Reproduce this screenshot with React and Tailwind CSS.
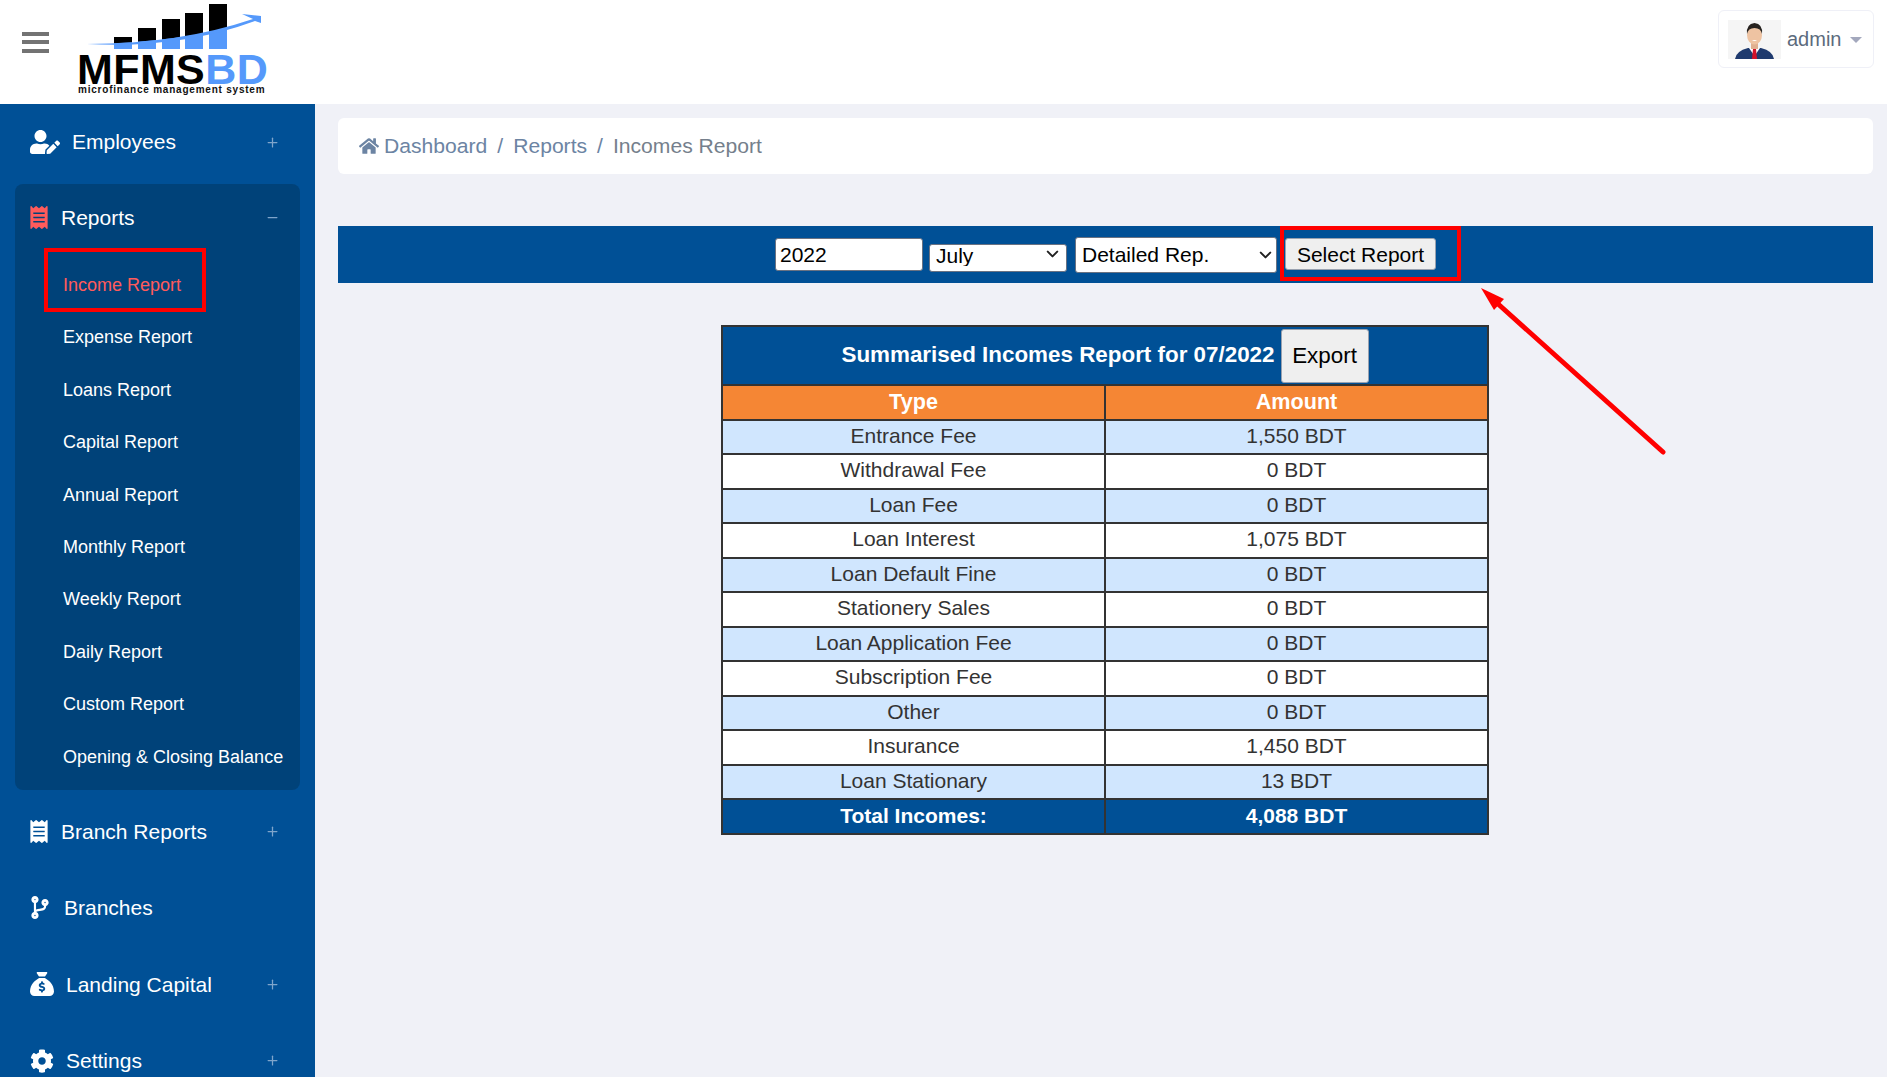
import { FaUserEdit, FaReceipt, FaCodeBranch, FaCog, FaHome } from 'react-icons/fa'
import { FaSackDollar } from 'react-icons/fa6'
import { Plus, Minus, ChevronDown } from 'lucide-react'

const subLinks = [
  'Income Report',
  'Expense Report',
  'Loans Report',
  'Capital Report',
  'Annual Report',
  'Monthly Report',
  'Weekly Report',
  'Daily Report',
  'Custom Report',
  'Opening & Closing Balance',
]

const rows = [
  ['Entrance Fee', '1,550 BDT'],
  ['Withdrawal Fee', '0 BDT'],
  ['Loan Fee', '0 BDT'],
  ['Loan Interest', '1,075 BDT'],
  ['Loan Default Fine', '0 BDT'],
  ['Stationery Sales', '0 BDT'],
  ['Loan Application Fee', '0 BDT'],
  ['Subscription Fee', '0 BDT'],
  ['Other', '0 BDT'],
  ['Insurance', '1,450 BDT'],
  ['Loan Stationary', '13 BDT'],
]

function Logo() {
  return (
    <div className="relative h-[96px] w-[192px] shrink-0">
      <svg width="192" height="52" viewBox="78 0 192 52" className="absolute left-0 top-0">
        <defs>
          <clipPath id="below">
            <path d="M88 43 Q180 42 262 20 L262 52 L88 52 Z" />
          </clipPath>
        </defs>
        <g fill="#000">
          <rect x="115" y="36" width="18" height="12" />
          <rect x="139" y="27" width="18" height="21" />
          <rect x="163" y="18" width="18" height="30" />
          <rect x="186" y="12" width="18" height="36" />
          <rect x="210" y="3" width="18" height="45" />
        </g>
        <g fill="#5599fb" clipPath="url(#below)">
          <rect x="115" y="36" width="18" height="12" />
          <rect x="139" y="27" width="18" height="21" />
          <rect x="163" y="18" width="18" height="30" />
          <rect x="186" y="12" width="18" height="36" />
          <rect x="210" y="3" width="18" height="45" />
        </g>
        <path d="M88 43 Q180 43 254 18 L243 13 L262 15 L262 22 L256 20 Q180 48 88 43 Z" fill="#5599fb" />
      </svg>
      <div className="absolute left-0 top-[53px] whitespace-nowrap text-[43px] font-bold leading-[30px] tracking-[0.4px] text-black">
        MFMS<span className="text-[#5599fb]">BD</span>
      </div>
      <div className="absolute left-[1px] top-[83px] whitespace-nowrap text-[10px] font-bold leading-[11px] tracking-[0.78px] text-[#111]">
        microfinance management system
      </div>
    </div>
  )
}

function Avatar() {
  return (
    <svg width="53" height="39" viewBox="0 0 53 39" className="shrink-0 bg-[#f5f5f5]">
      <path d="M7 39 Q8 31 20 28 L33 28 Q45 31 46 39 Z" fill="#1f3a6e" />
      <path d="M21 28 L26.5 36 L32 28 Z" fill="#fff" />
      <path d="M25 29 L28 29 L29 39 L24 39 Z" fill="#d3122a" />
      <rect x="23" y="22" width="7" height="7" fill="#e0b090" />
      <ellipse cx="26.5" cy="15" rx="7.5" ry="9.5" fill="#eec3a2" />
      <path d="M19 14 Q18 4 26.5 3 Q35 4 34 14 Q33 8 26.5 8 Q20 8 19 14 Z" fill="#26221f" />
      <path d="M24 20 Q26.5 22 29 20 Z" fill="#fff" />
    </svg>
  )
}

function NavItem({ icon: Icon, label, gap, expand, iconClass }) {
  return (
    <div className="flex h-[76.4px] shrink-0 items-center pl-[30px] pr-[35px] text-white">
      <Icon className={`shrink-0 ${iconClass}`} />
      <span className={`text-[21px] ${gap}`}>{label}</span>
      {expand && <Plus size={15} className="ml-auto text-[#7fa5cb]" />}
    </div>
  )
}

function Sidebar() {
  return (
    <aside className="flex w-[315px] shrink-0 flex-col bg-[#005096]">
      <NavItem icon={FaUserEdit} label="Employees" gap="ml-[12px]" expand iconClass="h-[24px] w-[30px]" />
      <div className="mx-[15px] mb-[3px] mt-[4px] shrink-0 rounded-[8px] bg-[#004279] pb-[7px]">
        <div className="flex h-[75px] items-center pb-[9px] pl-[15px] pr-[20px] text-white">
          <FaReceipt className="h-[23px] w-[18px] shrink-0 text-[#ff5b5b]" />
          <span className="ml-[13px] text-[21px]">Reports</span>
          <Minus size={15} className="ml-auto text-[#7fa5cb]" />
        </div>
        {subLinks.map((label, i) => (
          <div key={label} className="relative flex h-[52.4px] items-center pl-[48px]">
            <span className={`whitespace-nowrap text-[18px] ${i === 0 ? 'text-[#ff5b5b]' : 'text-white'}`}>{label}</span>
            {i === 0 && (
              <div className="absolute left-[29px] top-[-11px] h-[64px] w-[162px] border-[4px] border-[#ff0000]" />
            )}
          </div>
        ))}
      </div>
      <NavItem icon={FaReceipt} label="Branch Reports" gap="ml-[13px]" expand iconClass="h-[23px] w-[18px]" />
      <NavItem icon={FaCodeBranch} label="Branches" gap="ml-[14px]" iconClass="h-[23px] w-[20px]" />
      <NavItem icon={FaSackDollar} label="Landing Capital" gap="ml-[12px]" expand iconClass="h-[24px] w-[24px]" />
      <NavItem icon={FaCog} label="Settings" gap="ml-[12px]" expand iconClass="h-[24px] w-[24px]" />
    </aside>
  )
}

function SelectBox({ value, className, selectClass, chevronRight }) {
  return (
    <div className={`relative ${className}`}>
      <select defaultValue={value} className={`h-full w-full appearance-none rounded-[3px] border border-gray-500 bg-white pl-[6px] ${selectClass}`}>
        <option>{value}</option>
      </select>
      <ChevronDown size={19} strokeWidth={2.5} className={`pointer-events-none absolute top-1/2 -translate-y-1/2 text-[#222] ${chevronRight}`} />
    </div>
  )
}

function FilterBar() {
  return (
    <div className="mt-[52px] flex h-[57px] items-center justify-center bg-[#005096]">
      <div className="flex items-center gap-[6px] text-[21px] text-black">
        <input
          defaultValue="2022"
          className="h-[33px] w-[148px] rounded-[3px] border border-gray-500 bg-white px-[4px] outline-none"
        />
        <SelectBox value="July" className="mb-[2px] h-[28px] w-[138px]" selectClass="pb-[5px] leading-[20px]" chevronRight="right-[5px]" />
        <SelectBox value="Detailed Rep." className="ml-[2px] h-[36px] w-[202px]" chevronRight="right-[2px]" />
        <div className="relative ml-[2px]">
          <button className="h-[32px] w-[151px] rounded-[3px] border border-gray-400 bg-[#efefef]">Select Report</button>
          <div className="absolute left-[-5px] top-[-12px] h-[55px] w-[181px] border-[4px] border-[#ff0000]" />
        </div>
      </div>
    </div>
  )
}

function ReportTable() {
  return (
    <table className="ml-[383px] mt-[42px] w-[768px] table-fixed border-collapse border-[2px] border-[#333] text-center text-[21px] leading-[26px] text-[#333]">
      <thead>
        <tr className="bg-[#005096]">
          <th colSpan={2} className="h-[59px] border-2 border-[#333] p-0">
            <span className="text-[22.4px] font-bold text-white">Summarised Incomes Report for 07/2022</span>
            <button className="ml-[6px] h-[54px] w-[88px] rounded-[3px] border border-gray-400 bg-[#efefef] align-middle text-[22.4px] font-normal text-black">
              Export
            </button>
          </th>
        </tr>
        <tr className="bg-[#f58634] font-bold text-white">
          <th className="h-[34.5px] border-2 border-[#333] p-0 text-[21.6px]">Type</th>
          <th className="h-[34.5px] border-2 border-[#333] p-0 text-[21.6px]">Amount</th>
        </tr>
      </thead>
      <tbody>
        {rows.map(([type, amount], i) => (
          <tr key={type} className={i % 2 === 0 ? 'bg-[#d0e6fe]' : 'bg-white'}>
            <td className="h-[34.5px] border-2 border-[#333] p-0 pb-[2px]">{type}</td>
            <td className="h-[34.5px] border-2 border-[#333] p-0 pb-[2px]">{amount}</td>
          </tr>
        ))}
        <tr className="bg-[#005096] font-bold text-white">
          <td className="h-[34.5px] border-2 border-[#333] p-0">Total Incomes:</td>
          <td className="h-[34.5px] border-2 border-[#333] p-0">4,088 BDT</td>
        </tr>
      </tbody>
    </table>
  )
}

export default function App() {
  return (
    <div className="relative flex h-[1077px] w-[1887px] flex-col overflow-hidden bg-[#f0f1f7] font-['Liberation_Sans',Arial,sans-serif]">
      <header className="flex h-[104px] shrink-0 items-center bg-white pl-[22px] pr-[13px]">
        <div className="mb-[20px] flex w-[27px] flex-col gap-[4.5px]">
          <span className="h-[4px] bg-[#737373]" />
          <span className="h-[4px] bg-[#737373]" />
          <span className="h-[4px] bg-[#737373]" />
        </div>
        <div className="ml-[28px] self-start pt-[1px]">
          <Logo />
        </div>
        <div className="ml-auto mb-[26px] flex h-[58px] w-[156px] items-center rounded-[6px] border border-[#eff0f7] pl-[9px]">
          <Avatar />
          <span className="ml-[6px] -mt-[1px] text-[20px] text-[#5c6b7d]">admin</span>
          <span className="ml-[9px] mt-[1px] h-0 w-0 border-x-[6px] border-t-[6px] border-x-transparent border-t-[#a3a8bd]" />
        </div>
      </header>
      <div className="flex min-h-0 flex-1">
        <Sidebar />
        <main className="min-w-0 flex-1 pl-[23px] pr-[14px] pt-[14px]">
          <nav className="flex h-[56px] items-center rounded-[6px] bg-white pl-[21px] text-[21.12px] text-[#6c84a3]">
            <FaHome size={20} className="mr-[5px]" />
            <span>Dashboard</span>
            <span className="mx-[10px]">/</span>
            <span>Reports</span>
            <span className="mx-[10px]">/</span>
            <span className="text-[#757f8c]">Incomes Report</span>
          </nav>
          <FilterBar />
          <ReportTable />
        </main>
      </div>
      {/* annotation arrow drawn on top of the screenshot */}
      <svg width="200" height="180" viewBox="1475 280 200 180" className="pointer-events-none absolute left-[1475px] top-[280px]">
        <line x1="1663" y1="452" x2="1497" y2="303" stroke="#ff0000" strokeWidth="5" strokeLinecap="round" />
        <polygon points="1481,288 1504,299 1494,310" fill="#ff0000" />
      </svg>
    </div>
  )
}
